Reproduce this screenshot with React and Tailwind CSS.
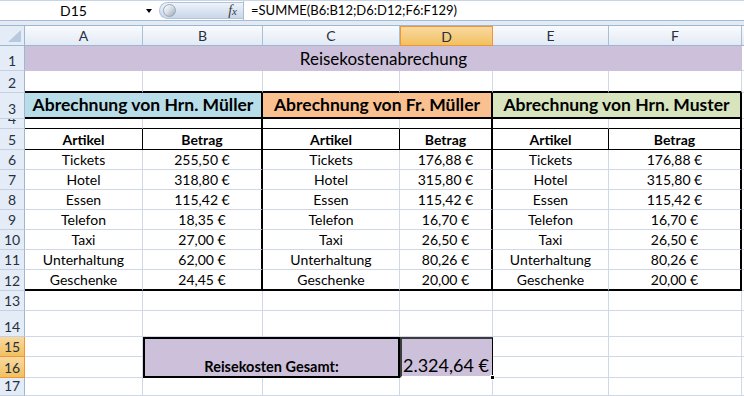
import React from "react";

const RB = {
  g: "border-r border-r-[#d0d7e5]",
  k1: "border-r border-r-black",
  k2: "border-r-2 border-r-black",
  n: "",
};
const BB = {
  g: "border-b border-b-[#d0d7e5]",
  k1: "border-b border-b-black",
  k2: "border-b-2 border-b-black",
  n: "",
};

function C({ r = "g", b = "g", className = "", children }) {
  return (
    <div
      className={`flex items-end justify-center pb-[1px] text-[14px] leading-[17px] whitespace-nowrap overflow-hidden text-black ${RB[r]} ${BB[b]} ${className}`}
    >
      {children}
    </div>
  );
}

function RH({ n, sel = false }) {
  return (
    <div
      className={`flex items-end justify-center overflow-hidden pb-[1px] text-[14px] leading-[17px] text-[#27303d] border-r border-b ${
        sel
          ? "bg-gradient-to-b from-[#f9d99f] to-[#f1c15f] border-r-[#f29536] border-b-[#f29536]"
          : "bg-[#e4ecf7] border-r-[#9eb6ce] border-b-[#c3d1e2]"
      }`}
    >
      <span className="shrink-0">{n}</span>
    </div>
  );
}

function X() {
  return <div className="border-b border-b-[#d0d7e5]" />;
}

const data = [
  [
    ["Tickets", "255,50 €"],
    ["Hotel", "318,80 €"],
    ["Essen", "115,42 €"],
    ["Telefon", "18,35 €"],
    ["Taxi", "27,00 €"],
    ["Unterhaltung", "62,00 €"],
    ["Geschenke", "24,45 €"],
  ],
  [
    ["Tickets", "176,88 €"],
    ["Hotel", "315,80 €"],
    ["Essen", "115,42 €"],
    ["Telefon", "16,70 €"],
    ["Taxi", "26,50 €"],
    ["Unterhaltung", "80,26 €"],
    ["Geschenke", "20,00 €"],
  ],
  [
    ["Tickets", "176,88 €"],
    ["Hotel", "315,80 €"],
    ["Essen", "115,42 €"],
    ["Telefon", "16,70 €"],
    ["Taxi", "26,50 €"],
    ["Unterhaltung", "80,26 €"],
    ["Geschenke", "20,00 €"],
  ],
];

function ColHead({ label, sel = false }) {
  return (
    <div
      className={`flex items-center justify-center text-[14px] leading-[17px] text-[#27303d] ${
        sel
          ? "bg-gradient-to-b from-[#f9d99f] to-[#f1c15f] border border-[#f29536]"
          : "bg-gradient-to-b from-[#f9fbfd] to-[#e2eaf5] border-r border-b border-r-[#a9bfd6] border-b-[#9eb6ce]"
      }`}
    >
      {label}
    </div>
  );
}

export default function App() {
  const rows = [0, 1, 2, 3, 4, 5, 6];
  return (
    <div className="w-[744px] h-[396px] overflow-hidden bg-white font-[Lato,'Liberation_Sans',sans-serif]">
      {/* formula bar */}
      <div className="h-[26px] flex flex-col bg-[#e3eaf4]">
        <div className="h-[21px] flex bg-white border-b border-b-[#a7bcd6] border-t border-t-[#c7d5e6]">
          <div className="w-[157px] relative flex items-center pl-[60px] text-[14px] leading-[17px] text-black">
            D15
            <span className="absolute left-[146px] top-[8px] w-0 h-0 border-l-[3.5px] border-r-[3.5px] border-t-[4px] border-l-transparent border-r-transparent border-t-black" />
          </div>
          <div className="w-[86px] relative flex items-center">
            <div className="absolute left-[2px] right-0 top-[1px] bottom-[1px] rounded-l-full bg-gradient-to-b from-[#eef3fa] via-[#dbe5f2] to-[#c9d7ea] border border-[#b3c4da] border-r-0" />
            <div className="relative ml-[6px] w-[13px] h-[13px] rounded-full bg-gradient-to-br from-white via-[#d6dde6] to-[#9aa6b4] border border-[#9aa8ba]" />
            <span className="relative ml-auto mr-[6px] text-[14px] italic font-['Liberation_Serif',serif] text-[#3a3a3a] leading-none">
              f<span className="text-[11px]">x</span>
            </span>
          </div>
          <div className="flex-1 border-l border-l-[#a7bcd6] flex items-center pl-[7px] text-[13px] leading-[17px] text-black">
            =SUMME(B6:B12;D6:D12;F6:F129)
          </div>
        </div>
        <div className="flex-1 border-b border-b-[#9eb6ce]" />
      </div>

      {/* grid */}
      <div className="grid grid-cols-[25px_118px_120px_137px_93px_116px_133px_2px] grid-rows-[20px_25px_22px_26px_10px_21px_20px_20px_20px_20px_20px_20px_21px_20px_26px_20px_21px_18px]">
        {/* header row */}
        <div className="bg-[#e4ecf7] border-r border-b border-r-[#9eb6ce] border-b-[#9eb6ce] relative">
          <svg className="absolute left-0 top-0" width="24" height="19" viewBox="0 0 24 19">
            <polygon points="21,4 21,16 8,16" fill="#b9c9dd" />
          </svg>
        </div>
        <ColHead label="A" />
        <ColHead label="B" />
        <ColHead label="C" />
        <ColHead label="D" sel />
        <ColHead label="E" />
        <ColHead label="F" />
        <div className="bg-gradient-to-b from-[#f9fbfd] to-[#e2eaf5] border-b border-b-[#9eb6ce]" />

        {/* row 1 */}
        <RH n="1" />
        <C r="n" b="n" className="col-span-6 bg-[#ccc0da] text-[17px] leading-[20px] pb-[2px]">
          Reisekostenabrechung
        </C>
        <X />

        {/* row 2 */}
        <RH n="2" />
        <C b="k2" />
        <C b="k2" />
        <C b="k2" />
        <C b="k2" />
        <C b="k2" />
        <C b="k2" />
        <X />

        {/* row 3 */}
        <RH n="3" />
        <C r="k2" b="k2" className="col-span-2 bg-[#b7dee8] font-bold text-[17.5px] leading-[20px] pb-[2px]">
          Abrechnung von Hrn. Müller
        </C>
        <C r="k2" b="k2" className="col-span-2 bg-[#fac090] font-bold text-[17.5px] leading-[20px] pb-[2px]">
          Abrechnung von Fr. Müller
        </C>
        <C r="k2" b="k2" className="col-span-2 bg-[#d7e4bd] font-bold text-[17.5px] leading-[20px] pb-[2px]">
          Abrechnung von Hrn. Muster
        </C>
        <X />

        {/* row 4 */}
        <RH n="4" />
        <C b="k1" />
        <C r="k2" b="k1" />
        <C b="k1" />
        <C r="k2" b="k1" />
        <C b="k1" />
        <C r="k2" b="k1" />
        <X />

        {/* row 5 */}
        <RH n="5" />
        <C r="k1" b="k1" className="font-bold text-[14.5px]">Artikel</C>
        <C r="k2" b="k1" className="font-bold text-[14.5px]">Betrag</C>
        <C r="k1" b="k1" className="font-bold text-[14.5px]">Artikel</C>
        <C r="k2" b="k1" className="font-bold text-[14.5px]">Betrag</C>
        <C r="k1" b="k1" className="font-bold text-[14.5px]">Artikel</C>
        <C r="k2" b="k1" className="font-bold text-[14.5px]">Betrag</C>
        <X />

        {rows.map((i) => {
          const last = i === 6;
          const b = last ? "k2" : "g";
          return (
            <React.Fragment key={i}>
              <RH n={String(6 + i)} />
              {data.map((p, j) => (
                <React.Fragment key={j}>
                  <C b={b}>{p[i][0]}</C>
                  <C r="k2" b={b}>{p[i][1]}</C>
                </React.Fragment>
              ))}
              <X />
            </React.Fragment>
          );
        })}

        {/* row 13 */}
        <RH n="13" />
        <C />
        <C />
        <C />
        <C />
        <C />
        <C />
        <X />

        {/* row 14 */}
        <RH n="14" />
        <C />
        <C />
        <C />
        <C />
        <C />
        <C />
        <X />

        {/* row 15 */}
        <RH n="15" sel />
        <C />
        <div className="col-span-2 row-span-2 border-2 border-black bg-[#ccc0da] flex items-end justify-center pb-[1px] text-[14.5px] leading-[17px] font-bold text-black whitespace-nowrap">
          Reisekosten Gesamt:
        </div>
        <div className="row-span-2 relative bg-[#ccc0da] border-t-2 border-l-2 border-r border-b-2 border-t-[#3b3b3b] border-l-[#3b3b3b] border-r-black border-b-white flex items-end justify-end pr-[3px] text-[18px] leading-[22px] text-black whitespace-nowrap">
          2.324,64 €
          <span className="absolute right-[-3px] bottom-[-4px] w-[5px] h-[5px] bg-black border border-white" />
        </div>
        <C />
        <C />
        <X />

        {/* row 16 */}
        <RH n="16" sel />
        <C />
        <C />
        <C />
        <X />

        {/* row 17 */}
        <RH n="17" />
        <C />
        <C />
        <C />
        <C />
        <C />
        <C />
        <X />
      </div>
    </div>
  );
}
